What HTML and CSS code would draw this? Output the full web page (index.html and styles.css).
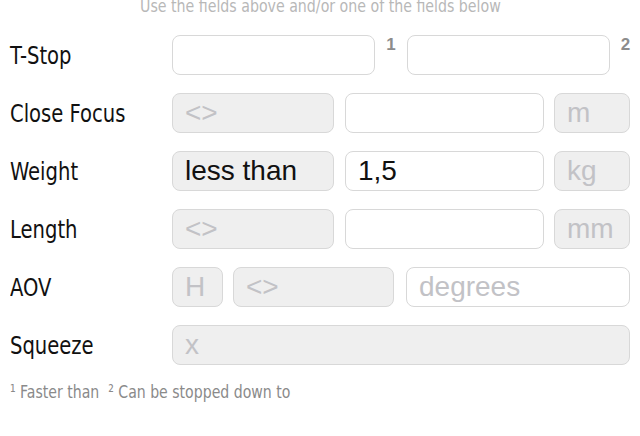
FILE: index.html
```html
<!DOCTYPE html>
<html lang="en">
<head>
    <meta charset="UTF-8">
    <meta name="viewport" content="width=device-width, initial-scale=1.0">
    <title>Lens Search</title>
    <link rel="stylesheet" href="styles.css">
</head>
<body>
    <div class="page">
        <p class="hint"><span class="narrow">Use the fields above and/or one of the fields below</span></p>

        <div class="rows">
            <div class="row">
                <span class="label">T-Stop</span>
                <input class="field half" type="text">
                <sup class="note">1</sup>
                <input class="field half" type="text">
                <sup class="note">2</sup>
            </div>

            <div class="row">
                <span class="label">Close Focus</span>
                <input class="field off op" type="text" placeholder="<>" readonly>
                <input class="field value" type="text">
                <input class="field off unit" type="text" placeholder="m" readonly>
            </div>

            <div class="row">
                <span class="label">Weight</span>
                <input class="field off op" type="text" value="less than" readonly>
                <input class="field value" type="text" value="1,5">
                <input class="field off unit" type="text" placeholder="kg" readonly>
            </div>

            <div class="row">
                <span class="label">Length</span>
                <input class="field off op" type="text" placeholder="<>" readonly>
                <input class="field value" type="text">
                <input class="field off unit" type="text" placeholder="mm" readonly>
            </div>

            <div class="row">
                <span class="label">AOV</span>
                <input class="field off axis" type="text" placeholder="H" readonly>
                <input class="field off aov-op" type="text" placeholder="<>" readonly>
                <input class="field degrees" type="text" placeholder="degrees">
            </div>

            <div class="row">
                <span class="label">Squeeze</span>
                <input class="field off full" type="text" placeholder="x" readonly>
            </div>
        </div>

        <p class="footnote">&sup1; Faster than &nbsp;&sup2; Can be stopped down to</p>
    </div>
</body>
</html>
```

FILE: styles.css
```css
body {
    margin: 0;
    padding: 0;
    background-color: #fff;
    font-family: "DejaVu Sans Condensed", "DejaVu Sans", sans-serif;
    font-stretch: condensed;
}

.page {
    width: 640px;
    height: 436px;
    overflow: hidden;
}

/* the labels in the app use a condensed face, squeeze ours a bit more */
.narrow {
    display: inline-block;
    transform: scaleX(0.9);
}

.hint {
    margin: -5px 0 0;
    height: 22px;
    line-height: 22px;
    text-align: center;
    font-size: 17.5px;
    color: #b8b8b8;
}

.rows {
    display: flex;
    flex-direction: column;
    gap: 18px;
    margin-top: 18px;
}

.row {
    display: flex;
    align-items: center;
    height: 40px;
}

.row > * {
    flex: none;
}

.label {
    box-sizing: border-box;
    width: 172px;
    padding-left: 10px;
    font-size: 25px;
    color: #111;
    transform: scaleX(0.87);
    transform-origin: 10px center;
}

.field {
    box-sizing: border-box;
    height: 40px;
    margin: 0;
    padding: 0 12px;
    border: 1px solid #d8d8d8;
    border-radius: 8px;
    background-color: #fff;
    font-family: "Liberation Sans", Arial, sans-serif;
    font-size: 28px;
    color: #111;
    outline: none;
}

.field::placeholder {
    color: #c2c2c6;
}

.field.off {
    background-color: #efefef;
}

.half {
    width: 203px;
}

.note {
    align-self: flex-start;
    width: 32px;
    margin-top: 0;
    text-align: center;
    font-family: "Liberation Sans", Arial, sans-serif;
    font-size: 17px;
    font-weight: bold;
    line-height: 20px;
    color: #8c8c8c;
}

.row .note:last-child {
    width: 31px;
}

.op {
    width: 162px;
}

.value {
    width: 199px;
    margin-left: 11px;
}

.unit {
    width: 76px;
    margin-left: 10px;
}

.axis {
    width: 51px;
}

.aov-op {
    width: 161px;
    margin-left: 10px;
}

.degrees {
    width: 224px;
    margin-left: 12px;
}

.full {
    width: 458px;
}

.footnote {
    margin: 16px 0 0 10px;
    font-size: 18px;
    color: #8a8a8a;
    transform: scaleX(0.87);
    transform-origin: left center;
}
```
